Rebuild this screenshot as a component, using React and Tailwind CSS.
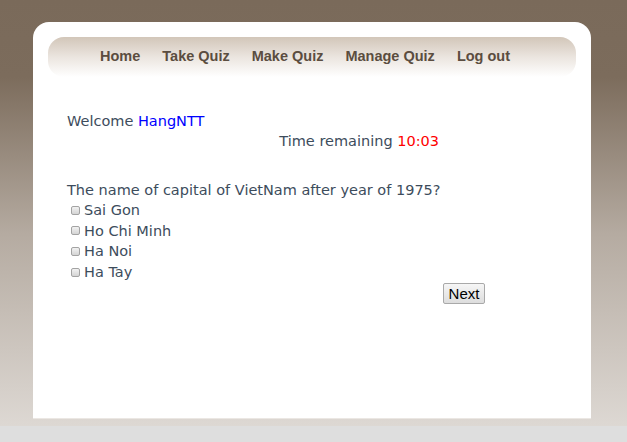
import React from 'react';

const navItems = ['Home', 'Take Quiz', 'Make Quiz', 'Manage Quiz', 'Log out'];
const answers = ['Sai Gon', 'Ho Chi Minh', 'Ha Noi', 'Ha Tay'];

const Checkbox = () => (
    <span className="inline-block w-[9px] h-[9px] ml-[4px] mr-[4px] rounded-[2px] border border-[#a3a3a3] bg-gradient-to-b from-[#f2f2f2] to-[#d4d4d4]" />
);

const App = () => {
    return (
        <div className="w-[627px] h-[442px] flex flex-col overflow-hidden">
            <div className="h-[426px] pt-[22px] pl-[33px] pr-[36px] bg-[linear-gradient(to_bottom,#7a6a5a_0%,#7c6c5c_18%,#b5aba1_55%,#ddd8d3_100%)]">
                <div className="h-[397px] bg-white rounded-t-[16px] border-b border-[#ebe7e3] px-[15px] pt-[15px]">
                    <nav className="h-[40px] rounded-[16px] bg-gradient-to-b from-[#d2c6b9] via-[#ebe5df] to-white flex items-center pl-[52px] gap-[22px] font-['Liberation_Sans',Arial,sans-serif] font-bold text-[14.5px] text-[#5b4d40]">
                        {navItems.map((item) => (
                            <span key={item}>{item}</span>
                        ))}
                    </nav>

                    <div className="pt-[34px] pl-[19px] font-['DejaVu_Sans',Verdana,sans-serif] text-[14.5px] leading-[20px] text-[#3d4c5c]">
                        <div>
                            Welcome <span className="text-[#0000ff]">HangNTT</span>
                        </div>
                        <div className="w-[372px] text-right">
                            Time remaining <span className="text-[#ff0000]">10:03</span>
                        </div>

                        <div className="mt-[29px]">The name of capital of VietNam after year of 1975?</div>
                        {answers.map((a) => (
                            <div key={a} className="flex items-center h-[20.6px]">
                                <Checkbox />
                                <span>{a}</span>
                            </div>
                        ))}

                        <div className="pt-[1px] pl-[376px]">
                            <button className="w-[42px] h-[21px] rounded-[2px] border border-[#a9a9a9] bg-gradient-to-b from-[#f6f6f6] to-[#dddddd] font-['Liberation_Sans',Arial,sans-serif] text-[15px] leading-[19px] text-black">
                                Next
                            </button>
                        </div>
                    </div>
                </div>
            </div>
            <div className="flex-1 bg-[#dedede]" />
        </div>
    );
};

export default App;
